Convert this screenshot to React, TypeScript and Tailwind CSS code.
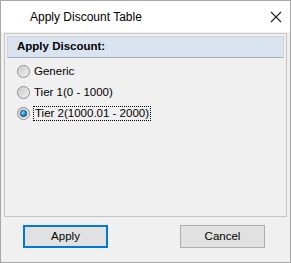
import React from "react";

function Radio({ checked }: { checked?: boolean }) {
  return (
    <svg width="13" height="13" viewBox="0 0 13 13" className="shrink-0">
      <defs>
        <linearGradient id={checked ? "gc" : "gu"} x1="0" y1="0" x2="1" y2="1">
          <stop offset="0" stopColor="#c4c4c4" />
          <stop offset="1" stopColor="#f4f4f4" />
        </linearGradient>
        <radialGradient id="dot" cx="0.4" cy="0.35" r="0.7">
          <stop offset="0" stopColor="#7fd0ff" />
          <stop offset="0.6" stopColor="#1a8fd8" />
          <stop offset="1" stopColor="#0a4f8c" />
        </radialGradient>
      </defs>
      <circle cx="6.5" cy="6.5" r="6" fill={`url(#${checked ? "gc" : "gu"})`} stroke="#8a8a8a" strokeWidth="1" />
      <circle cx="6.5" cy="6.5" r="4.6" fill="none" stroke="#e6e6e6" strokeWidth="0.8" />
      {checked && <circle cx="6.5" cy="6.5" r="3.2" fill="url(#dot)" stroke="#173f6b" strokeWidth="0.7" />}
    </svg>
  );
}

export default function App() {
  const font = { fontFamily: '"Liberation Sans", Arial, sans-serif' };
  return (
    <div
      className="w-[291px] h-[263px] border border-[#a8a8a8] bg-[#f0f0f0] flex flex-col text-black"
      style={font}
    >
      <div className="h-[31px] bg-white flex items-center shrink-0 relative">
        <span className="ml-[29px] text-[12px]">Apply Discount Table</span>
        <svg className="absolute left-[269px] top-[10px]" width="12" height="12" viewBox="0 0 12 12">
          <path d="M1 1 L11 11 M11 1 L1 11" stroke="#222" strokeWidth="1.1" />
        </svg>
      </div>
      <div className="flex-1 flex flex-col px-[3px] pt-[1px]">
        <div className="h-[184px] border border-[#c4c4c4] p-[2px] flex flex-col">
          <div className="h-[22px] border border-[#d2d2d2] border-b-[#a3afc2] bg-[#dae4f1] flex items-center pl-[9px]">
            <span className="text-[11.5px] font-bold">Apply Discount:</span>
          </div>
          <div className="flex flex-col mt-[3px] pl-[10px]">
            <div className="h-[21px] flex items-center gap-[3px]">
              <Radio />
              <span className="text-[11.5px] px-[1px]">Generic</span>
            </div>
            <div className="h-[21px] flex items-center gap-[3px]">
              <Radio />
              <span className="text-[11.5px] px-[1px]">Tier 1(0 - 1000)</span>
            </div>
            <div className="h-[21px] flex items-center gap-[3px]">
              <Radio checked />
              <span className="text-[11.5px] px-[1px] leading-[13px] border border-dotted border-black">
                Tier 2(1000.01 - 2000)
              </span>
            </div>
          </div>
        </div>
        <div className="flex justify-between mt-[8px] pl-[19px] pr-[22px]">
          <button className="w-[85px] h-[23px] border-2 border-[#0078d7] bg-[#e1e1e1] text-[11.5px]">
            Apply
          </button>
          <button className="w-[85px] h-[23px] border border-[#adadad] bg-[#e1e1e1] text-[11.5px]">
            Cancel
          </button>
        </div>
      </div>
    </div>
  );
}
